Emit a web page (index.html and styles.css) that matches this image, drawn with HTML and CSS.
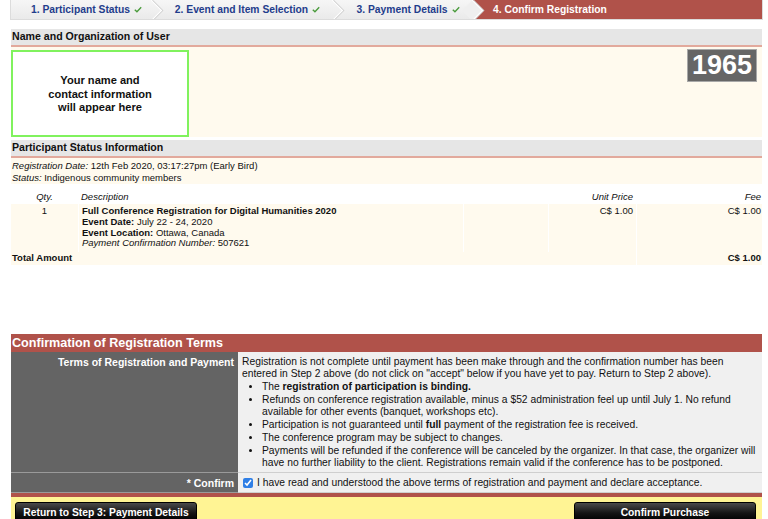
FILE: index.html
```html
<!DOCTYPE html>
<html lang="en">
<head>
<meta charset="utf-8">
<title>Confirm Registration</title>
<link rel="stylesheet" href="styles.css">
</head>
<body>
<div class="page">
  <ol class="steps">
    <li class="step done s1">1. Participant Status<svg class="chk" viewBox="0 0 10 8" width="8" height="7"><path d="M1 4.2 L3.7 6.8 L9 1.2" stroke="#4a9b3c" stroke-width="1.7" fill="none"/></svg></li>
    <li class="step done s2">2. Event and Item Selection<svg class="chk" viewBox="0 0 10 8" width="8" height="7"><path d="M1 4.2 L3.7 6.8 L9 1.2" stroke="#4a9b3c" stroke-width="1.7" fill="none"/></svg></li>
    <li class="step done s3">3. Payment Details<svg class="chk" viewBox="0 0 10 8" width="8" height="7"><path d="M1 4.2 L3.7 6.8 L9 1.2" stroke="#4a9b3c" stroke-width="1.7" fill="none"/></svg></li>
    <li class="step current s4">4. Confirm Registration</li>
  </ol>

  <section class="sec">
    <h2 class="sec-head">Name and Organization of User</h2>
    <div class="user-body">
      <div class="user-box">Your name and<br>contact information<br>will appear here</div>
      <div class="badge">1965</div>
    </div>
  </section>

  <section class="sec sec2">
    <h2 class="sec-head">Participant Status Information</h2>
    <div class="status-body">
      <div><i>Registration Date:</i> 12th Feb 2020, 03:17:27pm (Early Bird)</div>
      <div><i>Status:</i> Indigenous community members</div>
    </div>
    <table class="items">
      <colgroup>
        <col class="c-qty"><col class="c-desc"><col class="c-empty"><col class="c-unit"><col class="c-fee">
      </colgroup>
      <thead>
        <tr>
          <th class="qty">Qty.</th>
          <th class="desc">Description</th>
          <th></th>
          <th class="num">Unit Price</th>
          <th class="num fee">Fee</th>
        </tr>
      </thead>
      <tbody>
        <tr class="item">
          <td class="qty">1</td>
          <td class="desc"><b>Full Conference Registration for Digital Humanities 2020</b><br><b>Event Date:</b> July 22 - 24, 2020<br><b>Event Location:</b> Ottawa, Canada<br><i>Payment Confirmation Number:</i> 507621</td>
          <td></td>
          <td class="num">C$ 1.00</td>
          <td class="num fee">C$ 1.00</td>
        </tr>
        <tr class="total">
          <td colspan="4" class="total-label">Total Amount</td>
          <td class="num fee">C$ 1.00</td>
        </tr>
      </tbody>
    </table>
  </section>

  <section class="terms">
    <h2 class="terms-head">Confirmation of Registration Terms</h2>
    <table class="terms-table">
      <tr>
        <td class="label">Terms of Registration and Payment</td>
        <td class="content">
          <p class="lead">Registration is not complete until payment has been make through and the confirmation number has been entered in Step 2 above (do not click on "accept" below if you have yet to pay. Return to Step 2 above).</p>
          <ul class="rules">
            <li>The <b>registration of participation is binding.</b></li>
            <li>Refunds on conference registration available, minus a $52 administration feel up until July 1. No refund available for other events (banquet, workshops etc).</li>
            <li>Participation is not guaranteed until <b>full</b> payment of the registration fee is received.</li>
            <li>The conference program may be subject to changes.</li>
            <li>Payments will be refunded if the conference will be canceled by the organizer. In that case, the organizer will have no further liability to the client. Registrations remain valid if the conference has to be postponed.</li>
          </ul>
        </td>
      </tr>
      <tr class="confirm-row">
        <td class="label">* Confirm</td>
        <td class="content"><label class="accept"><input type="checkbox" checked> I have read and understood the above terms of registration and payment and declare acceptance.</label></td>
      </tr>
    </table>
  </section>

  <div class="actions">
    <button class="btn" type="button">Return to Step 3: Payment Details</button>
    <button class="btn" type="button">Confirm Purchase</button>
  </div>
</div>
</body>
</html>
```

FILE: styles.css
```css
* { box-sizing: border-box; }

body {
  margin: 0;
  font-family: "Liberation Sans", Arial, Helvetica, sans-serif;
  font-size: 10.3px;
  color: #111;
  background: #fff;
}

.page {
  width: 753px;
  margin-left: 10px;
}

/* steps bar */
.steps {
  list-style: none;
  margin: 0;
  padding: 0;
  display: flex;
  height: 20px;
  border: 1px solid #dcdcdc;
  border-top: 0;
  background: linear-gradient(#f6f6f6, #eaeaea);
  overflow: hidden;
  position: relative;
  z-index: 0;
}

.step {
  position: relative;
  display: flex;
  align-items: center;
  justify-content: center;
  padding-left: 10px;
  padding-bottom: 1px;
  font-weight: bold;
  color: #1f3d8c;
  white-space: nowrap;
}

.chk { margin-left: 4px; margin-top: 1px; }

.s1 { width: 141px; }
.s2 { width: 181px; }
.s3 { width: 140px; }
.s4 { flex: 1; }

.step.done::after {
  content: "";
  position: absolute;
  right: -7px;
  top: 2.5px;
  width: 14px;
  height: 14px;
  transform: rotate(45deg);
  border-top: 1px solid #fff;
  border-right: 1px solid #fff;
  box-shadow: 1px -1px 0 #d2d2d2;
  z-index: 1;
}

.s3.done::after { background: #efefef; }

.step.current {
  background: #b0524a;
  color: #fff;
  justify-content: flex-start;
  padding-left: 20px;
}

/* sections */
.sec {
  margin: 9px 1px 0;
}

.sec2 { margin-top: 3px; }

.sec-head {
  margin: 0;
  height: 18px;
  padding-left: 1px;
  font-size: 10.6px;
  line-height: 15.5px;
  font-weight: bold;
  background: #e6e6e6;
  border-bottom: 2px solid #e2a99c;
}

.user-body {
  display: flex;
  justify-content: space-between;
  align-items: flex-start;
  background: #fffaee;
}

.user-box {
  margin-top: 3px;
  width: 178px;
  height: 87px;
  border: 2px solid #80f25e;
  background: #fff;
  display: flex;
  align-items: center;
  justify-content: center;
  padding-top: 2px;
  text-align: center;
  font-weight: bold;
  font-size: 11.1px;
  line-height: 13.7px;
}

.badge {
  margin: 2px 5px 0 0;
  background: #666;
  color: #fff;
  font-weight: bold;
  font-size: 27px;
  line-height: 31px;
  padding: 0 4px;
  border: 1px solid #a8a8a8;
}

.status-body {
  background: #fffaee;
  padding: 2px 1px 1px;
  font-size: 9.5px;
  line-height: 11.6px;
}

/* items table */
.items {
  width: 100%;
  border-collapse: separate;
  border-spacing: 0;
  table-layout: fixed;
  font-size: 9.5px;
  line-height: 10.9px;
}

.c-qty { width: 67px; }
.c-desc { width: 385px; }
.c-empty { width: 85px; }
.c-unit { width: 88px; }
.c-fee { width: 126px; }

.items th {
  font-weight: normal;
  font-style: italic;
  height: 20px;
  padding: 6px 3px 1px;
  vertical-align: bottom;
  text-align: left;
  background: #fff;
}

.items td {
  background: #fffaee;
  vertical-align: top;
  padding: 1.5px 3px 2.5px;
}

.items td + td { border-left: 1px solid #fff; }

.items .qty { text-align: center; }
.items .num { text-align: right; }
.items .fee { padding-right: 1px; }

.items .total td {
  font-weight: bold;
  padding: 1px 1px 1px;
}

/* terms */
.terms {
  margin: 69px 1px 0;
}

.terms-head {
  margin: 0;
  background: #b0524a;
  color: #fff;
  font-size: 12.6px;
  line-height: 18.4px;
  font-weight: bold;
  padding: 0 1px;
}

.terms-table {
  width: 100%;
  border-collapse: collapse;
}

.terms-table td {
  vertical-align: top;
  padding: 4px 4px 3px;
  line-height: 12px;
  border-bottom: 1px solid #cfcfcf;
}

.terms-table .label {
  width: 227px;
  background: #646464;
  color: #fff;
  font-weight: bold;
  font-size: 10.5px;
  text-align: right;
  border-bottom-color: #9a9a9a;
}

.terms-table .content {
  background: #f0f0f0;
}

.lead { margin: 0; }

.rules {
  margin: 0;
  padding-left: 20px;
}

.rules li { margin: 1px 0 0; }

.accept {
  display: flex;
  align-items: center;
}

.accept input {
  width: 10px;
  height: 10px;
  margin: 0 4px 0 1px;
  accent-color: #2f7fe6;
}

.confirm-row td { padding: 4px 4px 3px; }

/* actions */
.actions {
  margin: 0 1px;
  border-top: 4px solid #b0524a;
  background: #fff494;
  padding: 5px 6px 10px 4px;
  display: flex;
  justify-content: space-between;
}

.btn {
  width: 182px;
  height: 20px;
  background: linear-gradient(#4a4a4a, #151515 55%, #000);
  color: #fff;
  font-family: inherit;
  font-weight: bold;
  font-size: 10.3px;
  border: 1px solid #000;
  border-radius: 3px 3px 0 0;
  padding: 0;
  text-align: center;
  cursor: pointer;
}
```
